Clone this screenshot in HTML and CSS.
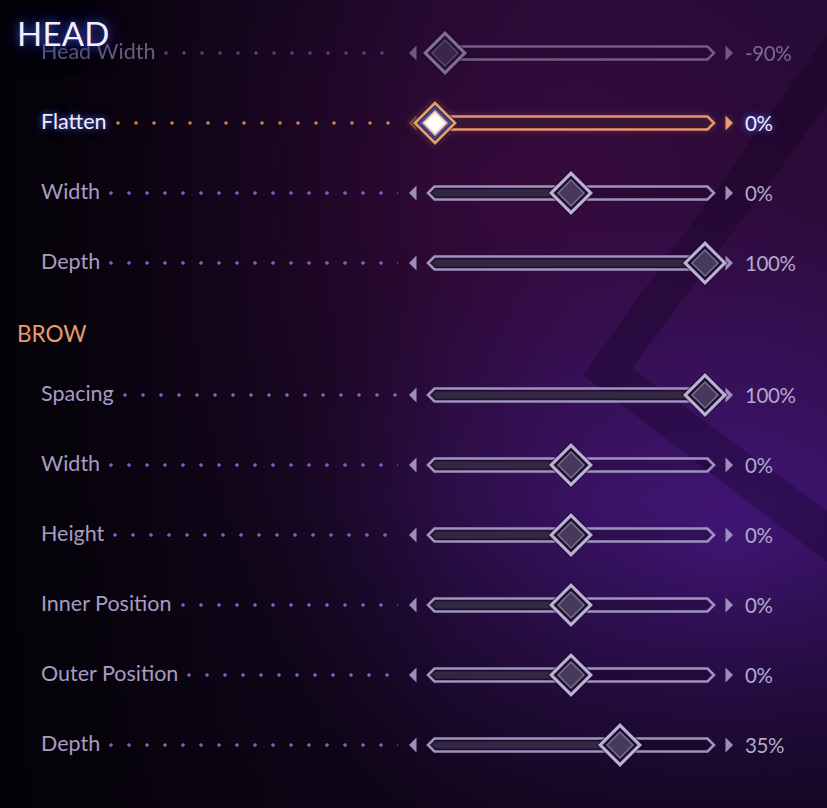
FILE: index.html
```html
<!DOCTYPE html>
<html lang="en">
<head>
<meta charset="utf-8">
<title>Head &amp; Brow</title>
<link rel="stylesheet" href="styles.css">
</head>
<body>
<svg class="defs" width="0" height="0" aria-hidden="true">
  <defs>
    <g id="rail">
      <polygon points="4,25 11.5,17.5 11.5,32.5" fill="#9d8fbd"/>
      <polygon points="328,25 320.5,17.5 320.5,32.5" fill="#9d8fbd"/>
      <polygon points="23,25 29.5,18.5 302.5,18.5 309,25 302.5,31.5 29.5,31.5" fill="rgba(18,8,28,0.25)" stroke="#a092bf" stroke-width="2.6"/>
    </g>
    <g id="rail-hot">
      <polygon points="4,25 11.5,17.5 11.5,32.5" fill="#8a4c3c"/>
      <polygon points="328,25 320.5,17.5 320.5,32.5" fill="#ec9b6c"/>
      <polygon points="23,25 29.5,18.5 302.5,18.5 309,25 302.5,31.5 29.5,31.5" fill="rgba(18,8,28,0.25)" stroke="#e8956b" stroke-width="2.6"/>
    </g>
    <g id="knob">
      <polygon points="0,-23.5 23.5,0 0,23.5 -23.5,0" fill="rgba(14,8,22,0.55)"/>
      <polygon points="0,-22 22,0 0,22 -22,0" fill="#bdafd9"/>
      <polygon points="0,-17.6 17.6,0 0,17.6 -17.6,0" fill="#1b1326"/>
      <polygon points="0,-14 14,0 0,14 -14,0" fill="#7c6e99"/>
      <polygon points="0,-12 12,0 0,12 -12,0" fill="#46395b"/>
    </g>
    <g id="knob-hot">
      <polygon points="0,-23.5 23.5,0 0,23.5 -23.5,0" fill="rgba(14,8,22,0.55)"/>
      <polygon points="0,-22 22,0 0,22 -22,0" fill="#e49a73"/>
      <polygon points="0,-18 18,0 0,18 -18,0" fill="#2b1a2b"/>
      <polygon points="0,-16.8 16.8,0 0,16.8 -16.8,0" fill="#3d4798"/>
      <polygon points="0,-13.2 13.2,0 0,13.2 -13.2,0" fill="#e2a37f"/>
      <polygon points="0,-11.6 11.6,0 0,11.6 -11.6,0" fill="#f6e6e4"/>
      <polygon points="0,-9 9,0 0,9 -9,0" fill="#ffffff"/>
    </g>
  </defs>
</svg>

<main class="screen">
  <svg class="backdrop" viewBox="0 0 827 808" width="827" height="808" aria-hidden="true">
    <polygon points="852,0 905,0 632,368 827,511 827,562 583,375" fill="rgba(12,4,28,0.3)"/>
  </svg>

  <div class="panel">
    <h1 class="title-head">HEAD</h1>

    <section class="group">
      <div class="row faded">
        <div class="lab"><span class="name">Head Width</span><span class="leader"></span></div>
        <svg class="slider" viewBox="0 0 330 50" width="330" height="50"><path class="fill" d="M26 25 L30.5 21 H40 V29 H30.5 Z"/><use href="#rail"/><use href="#knob" x="40" y="25"/></svg>
        <span class="val">-90%</span>
      </div>
      <div class="row hot">
        <div class="lab"><span class="name">Flatten</span><span class="leader"></span></div>
        <svg class="slider" viewBox="0 0 330 50" width="330" height="50"><use href="#rail-hot"/><use href="#knob-hot" x="30" y="25"/></svg>
        <span class="val">0%</span>
      </div>
      <div class="row">
        <div class="lab"><span class="name">Width</span><span class="leader"></span></div>
        <svg class="slider" viewBox="0 0 330 50" width="330" height="50"><path class="fill" d="M26 25 L30.5 21 H166 V29 H30.5 Z"/><use href="#rail"/><use href="#knob" x="166" y="25"/></svg>
        <span class="val">0%</span>
      </div>
      <div class="row">
        <div class="lab"><span class="name">Depth</span><span class="leader"></span></div>
        <svg class="slider" viewBox="0 0 330 50" width="330" height="50"><path class="fill" d="M26 25 L30.5 21 H300 V29 H30.5 Z"/><use href="#rail"/><use href="#knob" x="300" y="25"/></svg>
        <span class="val">100%</span>
      </div>
    </section>

    <h2 class="title-sub">BROW</h2>

    <section class="group">
      <div class="row">
        <div class="lab"><span class="name">Spacing</span><span class="leader"></span></div>
        <svg class="slider" viewBox="0 0 330 50" width="330" height="50"><path class="fill" d="M26 25 L30.5 21 H300 V29 H30.5 Z"/><use href="#rail"/><use href="#knob" x="300" y="25"/></svg>
        <span class="val">100%</span>
      </div>
      <div class="row">
        <div class="lab"><span class="name">Width</span><span class="leader"></span></div>
        <svg class="slider" viewBox="0 0 330 50" width="330" height="50"><path class="fill" d="M26 25 L30.5 21 H166 V29 H30.5 Z"/><use href="#rail"/><use href="#knob" x="166" y="25"/></svg>
        <span class="val">0%</span>
      </div>
      <div class="row">
        <div class="lab"><span class="name">Height</span><span class="leader"></span></div>
        <svg class="slider" viewBox="0 0 330 50" width="330" height="50"><path class="fill" d="M26 25 L30.5 21 H166 V29 H30.5 Z"/><use href="#rail"/><use href="#knob" x="166" y="25"/></svg>
        <span class="val">0%</span>
      </div>
      <div class="row">
        <div class="lab"><span class="name">Inner Position</span><span class="leader"></span></div>
        <svg class="slider" viewBox="0 0 330 50" width="330" height="50"><path class="fill" d="M26 25 L30.5 21 H166 V29 H30.5 Z"/><use href="#rail"/><use href="#knob" x="166" y="25"/></svg>
        <span class="val">0%</span>
      </div>
      <div class="row">
        <div class="lab"><span class="name">Outer Position</span><span class="leader"></span></div>
        <svg class="slider" viewBox="0 0 330 50" width="330" height="50"><path class="fill" d="M26 25 L30.5 21 H166 V29 H30.5 Z"/><use href="#rail"/><use href="#knob" x="166" y="25"/></svg>
        <span class="val">0%</span>
      </div>
      <div class="row">
        <div class="lab"><span class="name">Depth</span><span class="leader"></span></div>
        <svg class="slider" viewBox="0 0 330 50" width="330" height="50"><path class="fill" d="M26 25 L30.5 21 H215 V29 H30.5 Z"/><use href="#rail"/><use href="#knob" x="215" y="25"/></svg>
        <span class="val">35%</span>
      </div>
    </section>
  </div>
</main>
</body>
</html>
```

FILE: styles.css
```css
* { box-sizing: border-box; }

html, body {
  margin: 0;
  padding: 0;
  width: 827px;
  height: 808px;
  overflow: hidden;
  background: #0a0410;
}

.defs {
  position: absolute;
  width: 0;
  height: 0;
  overflow: hidden;
}

.screen {
  position: relative;
  width: 827px;
  height: 808px;
  overflow: hidden;
  font-family: Lato, "Open Sans", sans-serif;
  background:
    linear-gradient(90deg, #040207 0%, rgba(4,2,7,0.92) 8%, rgba(4,2,7,0.55) 30%, rgba(4,2,7,0.1) 55%, rgba(4,2,7,0) 70%),
    linear-gradient(180deg, rgba(8,3,14,0) 62%, rgba(10,4,18,0.65) 100%),
    radial-gradient(ellipse 55% 45% at 88% 68%, #43167a 0%, rgba(67,22,122,0) 100%),
    radial-gradient(ellipse 65% 45% at 60% 24%, #380a3e 0%, rgba(56,10,62,0) 100%),
    #220b33;
}

.backdrop {
  position: absolute;
  left: 0;
  top: 0;
  z-index: 0;
}

.panel {
  position: relative;
  z-index: 1;
  padding-top: 18px;
}

.title-head {
  position: absolute;
  left: 17px;
  top: 17px;
  margin: 0;
  font-size: 33px;
  line-height: 33px;
  font-weight: 400;
  color: #f4effb;
  letter-spacing: 0.2px;
  text-shadow: 0 0 8px rgba(60,80,200,0.95), 0 0 18px rgba(35,50,160,0.8), 0 0 30px rgba(25,35,120,0.6);
  z-index: 2;
}

.title-sub {
  margin: 0;
  padding: 22px 0 13px 17px;
  height: 62px;
  font-size: 22.5px;
  line-height: 27px;
  font-weight: 400;
  color: #ec9a6e;
}

.row {
  display: flex;
  align-items: center;
  height: 70px;
  padding-left: 41px;
}

.lab {
  width: 357px;
  display: flex;
  align-items: center;
}

.name {
  font-size: 21.5px;
  line-height: 26px;
  margin-bottom: 4px;
  color: #a79cc2;
  white-space: nowrap;
}

.leader {
  flex: 1;
  height: 4px;
  margin-left: 2px;
  background: radial-gradient(circle 2.2px at 9px 2px, #8060c2 0, #8060c2 1.4px, rgba(128,96,194,0) 2px) 0 0 / 18px 4px repeat-x;
}

.slider {
  display: block;
  margin-left: 7px;
  flex: none;
  overflow: visible;
}

.fill {
  fill: #3e3251;
  stroke: #1f1630;
  stroke-width: 1.2;
}

.val {
  margin-left: 10px;
  font-size: 20.5px;
  line-height: 24px;
  letter-spacing: -0.4px;
  color: #b3a8cb;
}

.faded {
  opacity: 0.6;
}

.hot .name,
.hot .val {
  color: #f2ecfb;
  text-shadow: 0 0 6px rgba(80,100,220,0.9), 0 0 12px rgba(60,70,190,0.6);
}

.hot .leader {
  background: radial-gradient(circle 2.2px at 9px 2px, #cc7c48 0, #cc7c48 1.4px, rgba(204,124,72,0) 2px) 0 0 / 18px 4px repeat-x;
}

.hot .slider {
  filter: drop-shadow(0 0 3px rgba(230,140,100,0.35));
}
```
